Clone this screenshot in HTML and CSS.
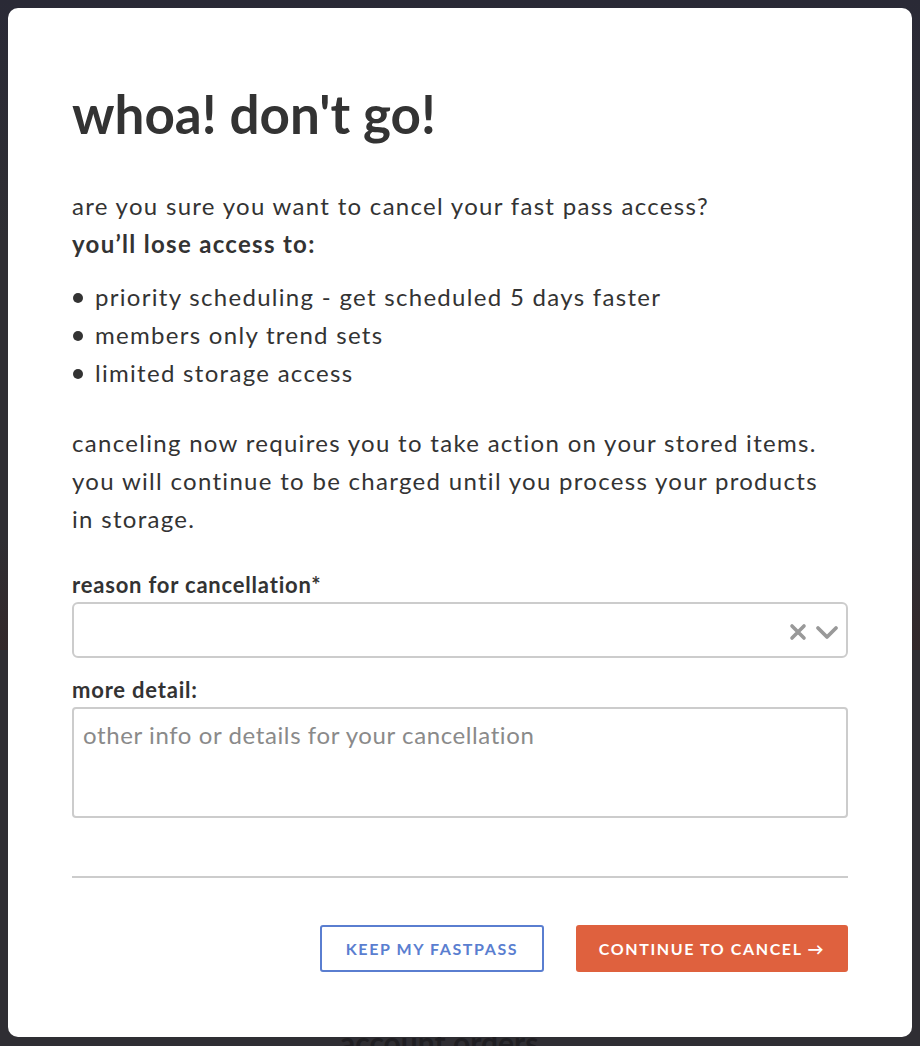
FILE: index.html
```html
<!DOCTYPE html>
<html lang="en">

<head>
    <meta charset="UTF-8">
    <meta name="viewport" content="width=device-width, initial-scale=1.0">
    <title>Cancel Fast Pass</title>
    <link rel="stylesheet" href="styles.css">
</head>

<body>
    <!-- page behind the dimmed overlay -->
    <div class="page">
        <div class="page-hero"></div>
        <div class="page-banner"></div>
        <h2 class="page-heading">account orders</h2>
    </div>

    <div class="backdrop">
        <div class="modal">
            <h1>whoa! don't go!</h1>
            <p class="intro">are you sure you want to cancel your fast pass access?<br>
                <strong>you’ll lose access to:</strong></p>
            <ul class="perks">
                <li>priority scheduling - get scheduled 5 days faster</li>
                <li>members only trend sets</li>
                <li>limited storage access</li>
            </ul>
            <p class="warning">canceling now requires you to take action on your stored items. you will continue to be charged until you process your products in storage.</p>

            <label class="field-label">reason for cancellation*</label>
            <div class="select">
                <span class="select-value"></span>
                <span class="select-icons">
                    <svg width="20" height="20" viewBox="0 0 20 20">
                        <path d="M4 4 L16 16 M16 4 L4 16" stroke="#999" stroke-width="3.6" stroke-linecap="round" fill="none" />
                    </svg>
                    <svg width="26" height="20" viewBox="0 0 26 20">
                        <path d="M4 6 L13 15 L22 6" stroke="#999" stroke-width="3.8" stroke-linecap="round" stroke-linejoin="round" fill="none" />
                    </svg>
                </span>
            </div>

            <label class="field-label">more detail:</label>
            <textarea class="detail" placeholder="other info or details for your cancellation"></textarea>

            <hr class="divider">

            <div class="actions">
                <button class="btn btn-outline">Keep my fastpass</button>
                <button class="btn btn-primary">Continue to cancel <span class="arrow">&#8594;</span></button>
            </div>
        </div>
    </div>
</body>

</html>
```

FILE: styles.css
```css
html, body {
    margin: 0;
    padding: 0;
    height: 100%;
}

body {
    background-color: #2f2e33;
    font-family: 'Lato', 'Open Sans', sans-serif;
    color: #333333;
    overflow: hidden;
}

.page {
    height: 100%;
    display: flex;
    flex-direction: column;
}

.page-hero {
    height: 540px;
    background: linear-gradient(180deg, #2a2a36 0%, #2f2e33 45%, #2f2e33 100%);
}

.page-banner {
    height: 110px;
    background: linear-gradient(180deg, #2f2e33 0%, #33282a 100%);
}

.page-heading {
    margin: auto 0 -14px 340px;
    font-size: 30px;
    color: #1f1e22;
}

.backdrop {
    position: fixed;
    inset: 0;
    padding: 8px;
    box-sizing: border-box;
}

.modal {
    background: #ffffff;
    border-radius: 10px;
    width: 904px;
    height: 1029px;
    box-sizing: border-box;
    padding: 77px 64px 0 64px;
    display: flex;
    flex-direction: column;
}

h1 {
    font-size: 53px;
    font-weight: 700;
    margin: 0 0 44px;
    line-height: 58px;
    color: #333333;
}

.intro,
.warning,
.perks {
    font-size: 24px;
    line-height: 38px;
    letter-spacing: 1.3px;
    margin: 0;
}

.intro strong {
    font-weight: 700;
}

.perks {
    list-style: none;
    padding: 0;
    margin: 15px 0 32px;
}

.perks li::before {
    content: "";
    display: inline-block;
    width: 10px;
    height: 10px;
    border-radius: 50%;
    background: #333;
    margin: 0 12px 3px 1px;
}

.warning {
    max-width: 760px;
    margin-bottom: 33px;
}

.field-label {
    font-size: 22px;
    font-weight: 700;
    line-height: 28px;
    letter-spacing: 0.8px;
    margin-bottom: 3px;
}

.select {
    height: 56px;
    border: 2px solid #cccccc;
    border-radius: 6px;
    box-sizing: border-box;
    display: flex;
    align-items: center;
    justify-content: space-between;
    padding: 0 6px 0 12px;
    margin-bottom: 18px;
}

.select-icons {
    display: flex;
    align-items: center;
    gap: 6px;
    padding-top: 4px;
}

.detail {
    height: 111px;
    border: 2px solid #cccccc;
    border-radius: 4px;
    box-sizing: border-box;
    padding: 11px 9px;
    font-family: inherit;
    font-size: 24px;
    letter-spacing: 0.6px;
    resize: none;
    color: #333;
}

.detail::placeholder {
    color: #8a8a8a;
}

.divider {
    border: none;
    border-top: 2px solid #cccccc;
    margin: 58px 0 47px;
    width: 100%;
}

.actions {
    display: flex;
    justify-content: flex-end;
    gap: 32px;
}

.btn {
    height: 47px;
    font-family: inherit;
    font-size: 16px;
    font-weight: 700;
    text-transform: uppercase;
    letter-spacing: 1.6px;
    border-radius: 3px;
    cursor: pointer;
}

.btn-outline {
    width: 224px;
    background: #ffffff;
    color: #5a7ed0;
    border: 2px solid #5a7ed0;
}

.btn-primary {
    width: 272px;
    background: #df613e;
    color: #ffffff;
    border: none;
}

.arrow {
    font-weight: 700;
}
```
